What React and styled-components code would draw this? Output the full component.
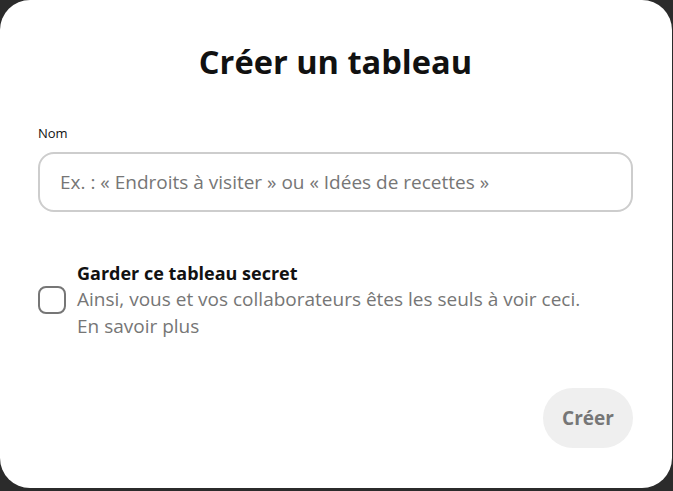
import React from 'react'
import styled, { createGlobalStyle } from 'styled-components'

const GlobalStyle = createGlobalStyle`
  html, body {
    margin: 0;
    padding: 0;
    background: #2b2b2b;
  }
  body {
    font-family: "Open Sans", "Noto Sans", sans-serif;
  }
`

const Modal = styled.div`
  width: 672px;
  height: 488px;
  box-sizing: border-box;
  background: #fff;
  border-radius: 30px;
  padding: 40px 39px 0 38px;
  display: flex;
  flex-direction: column;
`
const Title = styled.h1`
  margin: 0;
  text-align: center;
  font-size: 32.6px;
  font-weight: 700;
  color: #111;
  line-height: 44px;
`
const Label = styled.label`
  margin-top: 40px;
  font-size: 13px;
  color: #111;
  line-height: 18px;
`
const Input = styled.input`
  margin-top: 10px;
  height: 60px;
  box-sizing: border-box;
  border: 2px solid #cdcdcd;
  border-radius: 16px;
  padding: 0 20px;
  font-family: inherit;
  font-size: 19px;
  color: #111;
  outline: none;
  &::placeholder {
    color: #767676;
  }
`
const SecretRow = styled.div`
  margin-top: 48px;
  display: flex;
  align-items: center;
  gap: 11px;
`
const Checkbox = styled.span`
  width: 28px;
  height: 28px;
  box-sizing: border-box;
  border: 2px solid #767676;
  border-radius: 8px;
  flex-shrink: 0;
`
const SecretText = styled.div`
  display: flex;
  flex-direction: column;
`
const SecretTitle = styled.div`
  font-size: 18px;
  font-weight: 700;
  color: #111;
  line-height: 26px;
`
const SecretDesc = styled.div`
  font-size: 19px;
  color: #767676;
  line-height: 27px;
`
const Footer = styled.div`
  margin-top: auto;
  margin-bottom: 40px;
  display: flex;
  justify-content: flex-end;
`
const Button = styled.button`
  width: 90px;
  height: 60px;
  border: none;
  border-radius: 30px;
  background: #efefef;
  color: #767676;
  font-family: inherit;
  font-size: 19px;
  font-weight: 700;
`

const App = () =>
  <>
    <GlobalStyle />
    <Modal>
      <Title>Créer un tableau</Title>
      <Label>Nom</Label>
      <Input placeholder="Ex. : « Endroits à visiter » ou « Idées de recettes »" />
      <SecretRow>
        <Checkbox />
        <SecretText>
          <SecretTitle>Garder ce tableau secret</SecretTitle>
          <SecretDesc>
            Ainsi, vous et vos collaborateurs êtes les seuls à voir ceci.<br />
            En savoir plus
          </SecretDesc>
        </SecretText>
      </SecretRow>
      <Footer>
        <Button>Créer</Button>
      </Footer>
    </Modal>
  </>

export default App
